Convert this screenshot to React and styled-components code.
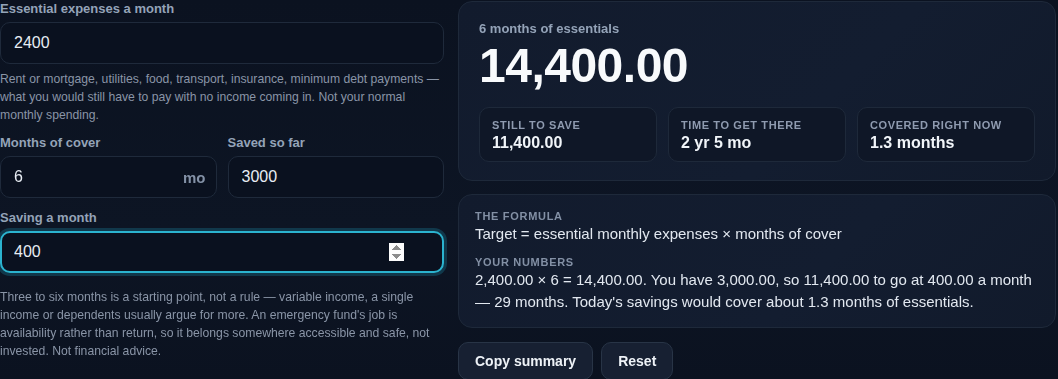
import React from "react";
import styled, { createGlobalStyle, css } from "styled-components";

const GlobalStyle = createGlobalStyle`
  html, body {
    margin: 0;
    padding: 0;
    background: linear-gradient(180deg, #0b1220 0%, #0d1524 60%, #0b1220 100%);
    color: #e2e8f0;
    font-family: "Liberation Sans", Arial, sans-serif;
    min-height: 100%;
  }
  * { box-sizing: border-box; }
`;

const Page = styled.div`
  display: grid;
  grid-template-columns: 444px 598px;
  column-gap: 14px;
  align-items: start;
  height: 379px;
  overflow: hidden;
`;

const Left = styled.div`
  display: flex;
  flex-direction: column;
  padding-top: 1px;
`;

const Field = styled.div`
  display: flex;
  flex-direction: column;
  min-width: 0;
`;

const Label = styled.label`
  font-size: 13px;
  line-height: 16px;
  font-weight: 700;
  color: #94a3b8;
  margin-bottom: 5px;
`;

const InputWrap = styled.div`
  position: relative;
  display: flex;
`;

const Input = styled.input`
  width: 100%;
  height: 42px;
  background: #0a111f;
  border: 1px solid #1f2a3b;
  border-radius: 10px;
  color: #e8edf4;
  font-family: "Liberation Sans", Arial, sans-serif;
  font-size: 16px;
  padding: 0 38px 0 13px;
  outline: none;
  ${(p) =>
    p.$active &&
    css`
      border: 2px solid #2bb3cf;
      padding-left: 12px;
      box-shadow: 0 0 0 3px rgba(34, 180, 215, 0.22);
    `}
  &:focus {
    border: 2px solid #2bb3cf;
    padding-left: 12px;
    box-shadow: 0 0 0 3px rgba(34, 180, 215, 0.22);
  }
`;

const Suffix = styled.span`
  position: absolute;
  right: 11px;
  top: 50%;
  transform: translateY(-50%);
  font-size: 15px;
  font-weight: 700;
  color: #8391a6;
`;

const Help = styled.p`
  margin: ${(p) => (p.$gap ? "15px" : "6px")} 0 0;
  font-size: 12.2px;
  line-height: 18px;
  color: #8a95a7;
`;

const Row = styled.div`
  display: grid;
  grid-template-columns: 1fr 1fr;
  gap: 11px;
  margin-top: 11px;
`;

const Spaced = styled.div`
  margin-top: 12px;
`;

const Right = styled.div`
  display: flex;
  flex-direction: column;
  padding-top: 1px;
`;

const Card = styled.section`
  background: linear-gradient(135deg, #121b2d 0%, #131d30 60%, #111a2b 100%);
  border: 1px solid #1e293a;
  border-radius: 14px;
  padding: ${(p) => p.$pad};
  margin-top: ${(p) => p.$top || "0"};
`;

const CardTitle = styled.div`
  font-size: 13px;
  line-height: 16px;
  font-weight: 700;
  color: #94a3b8;
`;

const Big = styled.div`
  font-size: 48px;
  line-height: 52px;
  font-weight: 700;
  color: #f8fafc;
  letter-spacing: -0.5px;
  margin-top: 3px;
`;

const Stats = styled.div`
  display: grid;
  grid-template-columns: repeat(3, 1fr);
  gap: 11px;
  margin-top: 15px;
`;

const Stat = styled.div`
  border: 1px solid #1e293a;
  background: #0f1727;
  border-radius: 10px;
  padding: 10px 12px 9px;
  height: 55px;
`;

const StatLabel = styled.div`
  font-size: 11px;
  line-height: 14px;
  font-weight: 700;
  letter-spacing: 0.6px;
  text-transform: uppercase;
  color: #8f9bb0;
`;

const StatValue = styled.div`
  font-size: 16px;
  line-height: 20px;
  font-weight: 700;
  color: #f1f5f9;
  margin-top: 1px;
`;

const Eyebrow = styled.div`
  font-size: 11px;
  line-height: 14px;
  font-weight: 700;
  letter-spacing: 0.7px;
  text-transform: uppercase;
  color: #8390a5;
  margin-top: ${(p) => (p.$first ? "0" : "10px")};
`;

const Body = styled.div`
  font-size: 15px;
  line-height: 22px;
  color: #e2e8f0;
`;

const Actions = styled.div`
  display: flex;
  gap: 8px;
  margin-top: 14px;
`;

const Button = styled.button`
  height: 38px;
  padding: 0 16px;
  background: #172032;
  border: 1px solid #283446;
  border-radius: 10px;
  color: #eef2f7;
  font-family: "Liberation Sans", Arial, sans-serif;
  font-size: 14px;
  font-weight: 700;
  cursor: pointer;
`;

export default function App() {
  return (
    <>
      <GlobalStyle />
      <Page>
        <Left>
          <Field>
            <Label>Essential expenses a month</Label>
            <Input type="number" defaultValue="2400" />
            <Help>
              Rent or mortgage, utilities, food, transport, insurance, minimum debt payments —
              what you would still have to pay with no income coming in. Not your normal
              monthly spending.
            </Help>
          </Field>
          <Row>
            <Field>
              <Label>Months of cover</Label>
              <InputWrap>
                <Input type="number" defaultValue="6" />
                <Suffix>mo</Suffix>
              </InputWrap>
            </Field>
            <Field>
              <Label>Saved so far</Label>
              <Input type="number" defaultValue="3000" />
            </Field>
          </Row>
          <Spaced>
            <Field>
              <Label>Saving a month</Label>
              <Input type="number" defaultValue="400" $active autoFocus />
            </Field>
          </Spaced>
          <Help $gap>
            Three to six months is a starting point, not a rule — variable income, a single
            income or dependents usually argue for more. An emergency fund's job is
            availability rather than return, so it belongs somewhere accessible and safe, not
            invested. Not financial advice.
          </Help>
        </Left>
        <Right>
          <Card $pad="19px 20px 18px">
            <CardTitle>6 months of essentials</CardTitle>
            <Big>14,400.00</Big>
            <Stats>
              <Stat>
                <StatLabel>Still to save</StatLabel>
                <StatValue>11,400.00</StatValue>
              </Stat>
              <Stat>
                <StatLabel>Time to get there</StatLabel>
                <StatValue>2 yr 5 mo</StatValue>
              </Stat>
              <Stat>
                <StatLabel>Covered right now</StatLabel>
                <StatValue>1.3 months</StatValue>
              </Stat>
            </Stats>
          </Card>
          <Card $pad="14px 16px 14px" $top="13px">
            <Eyebrow $first>The formula</Eyebrow>
            <Body>Target = essential monthly expenses × months of cover</Body>
            <Eyebrow>Your numbers</Eyebrow>
            <Body>
              2,400.00 × 6 = 14,400.00. You have 3,000.00, so 11,400.00 to go at 400.00 a month
              — 29 months. Today's savings would cover about 1.3 months of essentials.
            </Body>
          </Card>
          <Actions>
            <Button>Copy summary</Button>
            <Button>Reset</Button>
          </Actions>
        </Right>
      </Page>
    </>
  );
}
